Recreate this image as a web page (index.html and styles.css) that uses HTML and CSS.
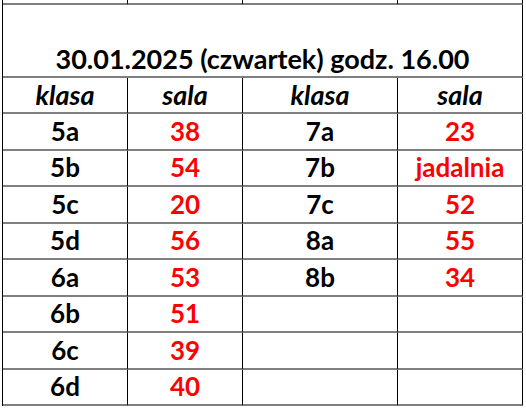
FILE: index.html
```html
<!DOCTYPE html>
<html lang="pl">
<head>
<meta charset="utf-8">
<title>Sale</title>
<link rel="stylesheet" href="styles.css">
</head>
<body>
<div class="sheet">
  <div class="cell strip"></div><div class="cell strip"></div><div class="cell strip"></div><div class="cell strip"></div>
  <div class="cell title">30.01.2025 (czwartek) godz. 16.00</div>
  <div class="cell head">klasa</div><div class="cell head">sala</div><div class="cell head">klasa</div><div class="cell head">sala</div>

  <div class="cell r1">5a</div><div class="cell r1 room">38</div><div class="cell r1">7a</div><div class="cell r1 room">23</div>
  <div class="cell r2">5b</div><div class="cell r2 room">54</div><div class="cell r2">7b</div><div class="cell r2 room">jadalnia</div>
  <div class="cell r1">5c</div><div class="cell r1 room">20</div><div class="cell r1">7c</div><div class="cell r1 room">52</div>
  <div class="cell r2">5d</div><div class="cell r2 room">56</div><div class="cell r2">8a</div><div class="cell r2 room">55</div>
  <div class="cell r1">6a</div><div class="cell r1 room">53</div><div class="cell r1">8b</div><div class="cell r1 room">34</div>
  <div class="cell r2">6b</div><div class="cell r2 room">51</div><div class="cell r2"></div><div class="cell r2 room"></div>
  <div class="cell r1">6c</div><div class="cell r1 room">39</div><div class="cell r1"></div><div class="cell r1 room"></div>
  <div class="cell r2">6d</div><div class="cell r2 room">40</div><div class="cell r2"></div><div class="cell r2 room"></div>
</div>
</body>
</html>
```
FILE: styles.css
```css
html, body {
  margin: 0;
  padding: 0;
  background: #ffffff;
}

.sheet {
  display: grid;
  grid-template-columns: 125px 115px 155px 125px;
  margin-left: 2px;
  width: 520px;
  border-left: 1px solid #000000;
  font-family: "Lato", "Liberation Sans", sans-serif;
  font-weight: 700;
  font-size: 26px;
  line-height: 26px;
  color: #000000;
}

.cell {
  box-sizing: border-box;
  border-right: 1px solid #000000;
  border-bottom: 2px solid #7f7f7f;
  display: flex;
  align-items: flex-end;
  justify-content: center;
  padding-bottom: 5px;
  white-space: nowrap;
}

.strip {
  height: 5px;
  padding: 0;
}

.title {
  grid-column: 1 / -1;
  height: 73px;
  font-size: 27px;
  padding-bottom: 4px;
}

.head {
  height: 36px;
  font-style: italic;
  font-size: 27px;
  padding-bottom: 4px;
}

.r1 {
  height: 37px;
}

.r2 {
  height: 36px;
}

.room {
  color: #ff0000;
}
```
